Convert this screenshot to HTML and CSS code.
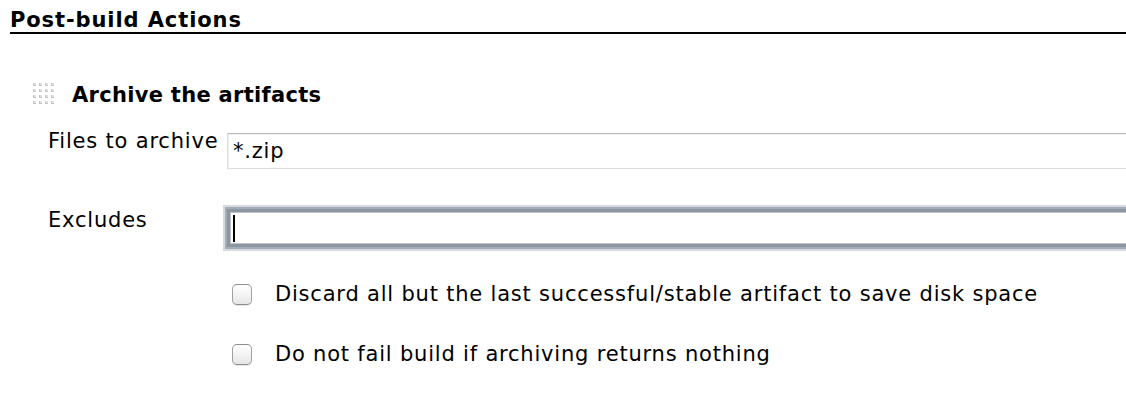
FILE: index.html
```html
<!DOCTYPE html>
<html>
<head>
<meta charset="utf-8">
<link rel="stylesheet" href="styles.css">
</head>
<body>
<div class="page">
  <div class="section-header">Post-build Actions</div>
  <div class="block">
    <div class="block-title">
      <svg class="grip" width="22" height="22" viewBox="0 0 22 22">
        <defs>
          <g id="dot"><rect x="0" y="0" width="3" height="3" fill="#c4c4c4"/><rect x="1" y="0" width="2" height="2" fill="#e2e2e2"/></g>
        </defs>
        <use href="#dot" x="0" y="0"/><use href="#dot" x="6" y="0"/><use href="#dot" x="12" y="0"/><use href="#dot" x="18" y="0"/>
        <use href="#dot" x="0" y="6"/><use href="#dot" x="6" y="6"/><use href="#dot" x="12" y="6"/><use href="#dot" x="18" y="6"/>
        <use href="#dot" x="0" y="12"/><use href="#dot" x="6" y="12"/><use href="#dot" x="12" y="12"/><use href="#dot" x="18" y="12"/>
        <use href="#dot" x="0" y="18"/><use href="#dot" x="6" y="18"/><use href="#dot" x="12" y="18"/><use href="#dot" x="18" y="18"/>
      </svg>
      <span class="title">Archive the artifacts</span>
    </div>
    <div class="form">
      <div class="label">Files to archive</div>
      <div class="field row1-field"><span class="value">*.zip</span></div>
      <div class="label row2">Excludes</div>
      <div class="field focused"><span class="caret"></span></div>
      <div class="spacer"></div>
      <div class="check first"><span class="box"></span><span class="check-text">Discard all but the last successful/stable artifact to save disk space</span></div>
      <div class="spacer"></div>
      <div class="check"><span class="box"></span><span class="check-text">Do not fail build if archiving returns nothing</span></div>
    </div>
  </div>
</div>
</body>
</html>
```

FILE: styles.css
```css
html, body {
  margin: 0;
  padding: 0;
  background: #ffffff;
  overflow: hidden;
}
body {
  font-family: "DejaVu Sans", Verdana, sans-serif;
  color: #000;
  width: 1126px;
  height: 414px;
}
.page {
  width: 1160px;
}
.section-header {
  margin-left: 10px;
  padding-top: 8px;
  font-size: 21px;
  letter-spacing: 0.9px;
  font-weight: bold;
  line-height: 24px;
  height: 24px;
  border-bottom: 2px solid #000;
}
.block {
  margin-top: 49px;
}
.block-title {
  display: flex;
  align-items: flex-start;
  margin-left: 33px;
  height: 24px;
}
.grip {
  display: block;
  flex: none;
}
.title {
  margin-left: 17px;
  font-size: 21px;
  letter-spacing: 0.3px;
  font-weight: bold;
  line-height: 24px;
}
.form {
  margin-top: 22px;
  margin-left: 48px;
  display: grid;
  grid-template-columns: 179px 1fr;
  align-items: start;
  font-size: 21px;
  letter-spacing: 0.8px;
}
.label {
  line-height: 24px;
}
.row2 {
  margin-top: 39px;
}
.field {
  box-sizing: border-box;
  height: 36px;
  border: 1px solid #dcdcdc;
  border-top-color: #bdbdbd;
  box-shadow: inset 1px 1px 0 #f0f0f0;
  background: #fff;
  line-height: 34px;
  padding-left: 5px;
}
.row1-field {
  margin-top: 4px;
}
.value {
  display: inline-block;
}
.field.focused {
  margin-top: 40px;
  height: 38px;
  border: 3px solid #8d96a0;
  box-shadow: inset 0 0 0 1px #bcc2c9, 0 0 0 2px #a4acb5, 0 0 0 4px #d6dade;
  padding-left: 3px;
  display: flex;
  align-items: center;
}
.caret {
  display: block;
  width: 2px;
  height: 27px;
  background: #000;
}
.check {
  display: flex;
  align-items: center;
  line-height: 24px;
  margin-top: 36px;
  padding-left: 5px;
}
.check.first {
  margin-top: 35px;
}
.box {
  box-sizing: border-box;
  width: 20px;
  height: 21px;
  border: 1px solid #a0a0a0;
  border-top-color: #8e8e8e;
  border-bottom-color: #8a8a8a;
  border-radius: 5px;
  background: linear-gradient(#ffffff, #f4f4f4 50%, #e6e6e6);
  box-shadow: 0 1px 0 #e8e8e8;
  flex: none;
}
.check-text {
  margin-left: 23px;
}
```
